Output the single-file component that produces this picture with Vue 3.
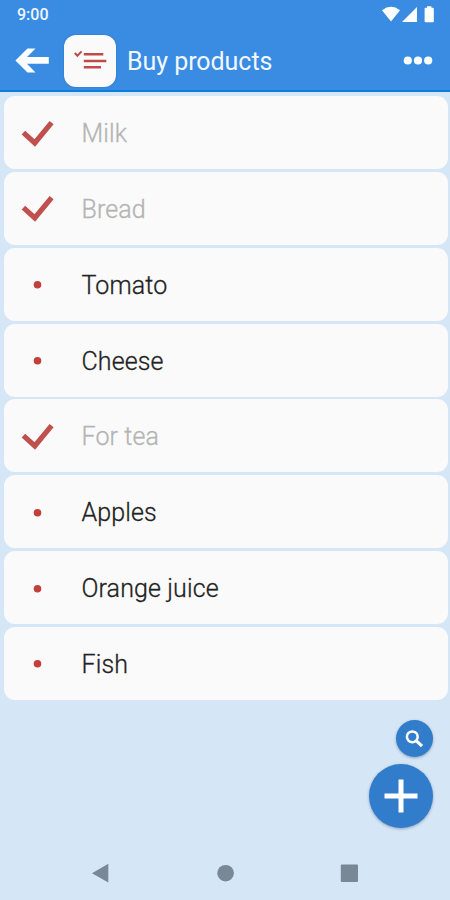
<template>
  <div class="screen">
    <header class="top">
      <div class="status-bar">
        <span class="clock">9:00</span>
        <svg class="status-icons" width="54" height="18" viewBox="0 0 54 18">
          <path d="M2 5.2 Q11 -1.5 20 5.2 L11 16.4 Z" />
          <path d="M37 2 V17 H22 Z" />
          <path d="M47 1.2 h4.4 v1.5 h1.4 q1 0 1 1 v12.5 q0 1 -1 1 h-7.2 q-1 0 -1 -1 v-12.5 q0 -1 1 -1 h1.4 z" />
        </svg>
      </div>
      <div class="toolbar">
        <svg class="back" width="36" height="28" viewBox="0 0 36 28">
          <path d="M0.4 13.5 L12.5 1.4 H20.5 L12 10 H33.8 V16.8 H12 L20.5 25.6 H12.5 Z" />
        </svg>
        <div class="list-icon">
          <svg width="52" height="52" viewBox="0 0 52 52">
            <path class="mini-check" d="M10.8 18 L13.4 20.8 L17.6 16.4" />
            <path class="mini-lines" d="M19.8 19.3 H39.3 M19.8 26 H42.3 M19.8 32.2 H37" />
          </svg>
        </div>
        <h1 class="title">{{ title }}</h1>
        <svg class="more" width="30" height="10" viewBox="0 0 30 10">
          <circle v-for="n in 3" :key="n" :cx="n * 10.2 - 5.4" cy="4.5" r="4.1" />
        </svg>
      </div>
    </header>

    <main class="items">
      <div v-for="item in items" :key="item.name" class="item" :class="{ done: item.done }">
        <svg class="mark" width="36" height="36" viewBox="0 0 36 36">
          <path v-if="item.done" d="M4.4 17.6 L15.8 28 L32.6 7.6" />
          <circle v-else cx="18.5" cy="18.8" r="3.8" />
        </svg>
        <span class="name">{{ item.name }}</span>
      </div>
    </main>

    <div class="fabs">
      <button class="fab small" aria-label="Search">
        <svg width="37" height="37" viewBox="0 0 37 37">
          <circle cx="16.3" cy="16.8" r="5.4" />
          <path class="handle" d="M20.2 20.6 L26 26.2" />
        </svg>
      </button>
      <button class="fab" aria-label="Add">
        <svg width="64" height="64" viewBox="0 0 64 64">
          <path d="M32 15.5 V48.5 M15.5 32 H48.5" />
        </svg>
      </button>
    </div>

    <nav class="nav-bar">
      <svg width="20" height="20" viewBox="0 0 20 20"><path d="M1 10.2 L17.3 0.8 V19.6 Z" /></svg>
      <svg width="20" height="20" viewBox="0 0 20 20"><circle cx="10.6" cy="10.2" r="8.3" /></svg>
      <svg width="20" height="20" viewBox="0 0 20 20"><rect x="1.8" y="1.6" width="17.2" height="17.4" rx="1" /></svg>
    </nav>
  </div>
</template>

<script setup>
import { ref } from 'vue'

const title = ref('Buy products')

const items = ref([
  { name: 'Milk', done: true },
  { name: 'Bread', done: true },
  { name: 'Tomato', done: false },
  { name: 'Cheese', done: false },
  { name: 'For tea', done: true },
  { name: 'Apples', done: false },
  { name: 'Orange juice', done: false },
  { name: 'Fish', done: false }
])
</script>

<style>
body {
  margin: 0;
}
</style>

<style scoped>
.screen {
  position: relative;
  width: 450px;
  height: 900px;
  overflow: hidden;
  display: flex;
  flex-direction: column;
  background: #d5e6f6;
  font-family: Roboto, 'Liberation Sans', sans-serif;
}

.top {
  box-sizing: border-box;
  height: 92px;
  flex: none;
  background: #398ce2;
  border-bottom: 2px solid #0c7ddc;
}

.status-bar {
  height: 30px;
  padding: 0 16px 0 17px;
  display: flex;
  align-items: center;
  justify-content: space-between;
}

.clock {
  color: #eef6ff;
  font-size: 16px;
  font-weight: 500;
  line-height: 30px;
}

.status-icons {
  margin-top: -2px;
  fill: #fff;
}

.toolbar {
  height: 61px;
  padding: 0 17px 0 15px;
  display: flex;
  align-items: center;
}

.back {
  fill: #fbfdff;
}

.list-icon {
  width: 52px;
  height: 52px;
  margin-left: 13px;
  border-radius: 12px;
  background: #fbfafb;
  box-shadow: 0 0 2px rgba(20, 70, 130, 0.4);
}

.list-icon svg {
  display: block;
  fill: none;
  stroke: #be4b49;
}

.mini-check {
  stroke-width: 2;
}

.mini-lines {
  stroke-width: 2.5;
}

.title {
  flex: 1;
  margin: 0 0 0 11px;
  padding-top: 2px;
  color: #f2f8ff;
  font-size: 25px;
  font-weight: 400;
  line-height: 32px;
  letter-spacing: -0.05px;
}

.more {
  fill: #fff;
}

.items {
  display: flex;
  flex-direction: column;
  gap: 2.85px;
  padding: 4px 2.5px 0 4px;
}

.item {
  height: 73px;
  display: flex;
  align-items: center;
  border-radius: 11px;
  background: #fafafa;
}

.mark {
  flex: none;
  margin-left: 15px;
  fill: #c23f3c;
}

.done .mark {
  fill: none;
  stroke: #c0504d;
  stroke-width: 5.2;
}

.name {
  margin-left: 26.5px;
  padding-top: 3px;
  color: #222;
  font-size: 25px;
  font-weight: 300;
  line-height: 34px;
  letter-spacing: 0.12px;
  -webkit-text-stroke: 0.3px currentColor;
}

.done .name {
  color: #b4b4b4;
}

.fabs {
  position: absolute;
  right: 17.5px;
  bottom: 72px;
  display: flex;
  flex-direction: column;
  align-items: flex-end;
  gap: 7px;
}

.fab {
  width: 64px;
  height: 64px;
  padding: 0;
  border: none;
  border-radius: 50%;
  background: #317dcb;
  box-shadow: 0 1px 3px rgba(30, 60, 100, 0.4);
}

.fab.small {
  width: 37px;
  height: 37px;
}

.fab svg {
  display: block;
  fill: none;
  stroke: #fff;
  stroke-width: 5;
}

.fab.small svg {
  stroke-width: 2.5;
}

.fab.small .handle {
  stroke-width: 3.2;
}

.nav-bar {
  height: 54px;
  margin-top: auto;
  padding: 0 91px;
  display: flex;
  align-items: center;
  justify-content: space-between;
  fill: #788896;
}
</style>
